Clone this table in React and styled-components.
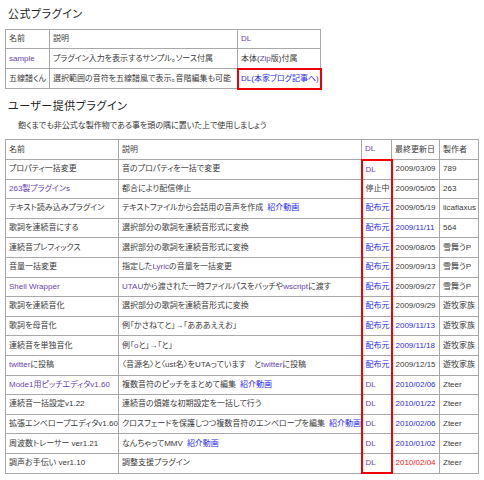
import styled, { createGlobalStyle } from 'styled-components';

const GlobalStyle = createGlobalStyle`
  body {
    margin: 0;
    background: #ffffff;
    font-family: 'Liberation Sans', 'Noto Sans CJK JP', sans-serif;
    font-feature-settings: 'palt';
    color: #3a3a3a;
  }
`;

const Page = styled.div`
  width: 484px;
  height: 480px;
  padding: 0 5px;
  box-sizing: border-box;
  overflow: hidden;
`;

const Heading = styled.h2`
  margin: 0;
  padding-left: 3px;
  font-size: 11px;
  font-weight: 400;
  line-height: 14px;
  color: #222;
  letter-spacing: 0.5px;
  padding-top: ${(p) => p.$top}px;
  padding-bottom: ${(p) => p.$bottom}px;
`;

const Note = styled.p`
  margin: 0;
  padding: 7px 0 7px 13px;
  font-size: 8px;
  line-height: 12px;
  color: #333;
`;

const Table = styled.table`
  border-collapse: collapse;
  border: 1px solid #707070;
  width: ${(p) => p.$width}px;
  table-layout: fixed;
`;

const Row = styled.tr`
  height: ${(p) => p.$h}px;
`;

const Cell = styled.td`
  border: 1px solid #a8a8a8;
  padding: 0 2px 0 3px;
  font-size: 8px;
  line-height: 10px;
  white-space: nowrap;
  overflow: visible;
  color: ${(p) => p.$color || '#3a3a3a'};

  &.boxed {
    border-left: 2px solid #f00000;
    border-right: 2px solid #f00000;
  }
  &.boxTop {
    border-top: 2px solid #f00000;
  }
  &.boxBottom {
    border-bottom: 2px solid #f00000;
  }
  &.boxAll {
    outline: 2px solid #f00000;
    outline-offset: -1px;
  }
`;

const tones = {
  visited: '#6a3fb0',
  blue: '#2a2af0',
  red: '#f02020',
  plain: '#3a3a3a',
};

const Link = styled.span`
  color: ${(p) => tones[p.$tone || 'blue']};
  margin-left: ${(p) => (p.$gap ? 4 : 0)}px;
`;

const officialRows = [
  { name: <Link $tone="visited">sample</Link>, desc: 'プラグイン入力を表示するサンプル。ソース付属', dl: <>本体(<Link $tone="visited">Zip</Link>版)付属</> },
  { name: '五線譜くん', desc: '選択範囲の音符を五線譜風で表示。音階編集も可能', dl: <Link>DL(本家ブログ記事へ)</Link>, boxed: true },
];

const userRows = [
  ['プロパティ一括変更', '音のプロパティを一括で変更', <Link $tone="visited">DL</Link>, '2009/03/09', 'plain', '789'],
  [<Link $tone="visited">263製プラグインs</Link>, '都合により配信停止', '停止中', '2009/05/05', 'plain', '263'],
  ['テキスト読み込みプラグイン', <>テキストファイルから会話用の音声を作成<Link $gap>紹介動画</Link></>, <Link>配布元</Link>, '2009/05/19', 'plain', 'iicafiaxus'],
  ['歌詞を連続音にする', '選択部分の歌詞を連続音形式に変換', <Link>配布元</Link>, '2009/11/11', 'blue', '564'],
  ['連続音プレフィックス', '選択部分の歌詞を連続音形式に変換', <Link>配布元</Link>, '2009/08/05', 'plain', '雪舞うP'],
  ['音量一括変更', <>指定した<Link $tone="visited">Lyric</Link>の音量を一括変更</>, <Link>配布元</Link>, '2009/09/13', 'plain', '雪舞うP'],
  [<Link $tone="visited">Shell Wrapper</Link>, <><Link $tone="visited">UTAU</Link>から渡された一時ファイルパスをバッチや<Link $tone="visited">wscript</Link>に渡す</>, <Link>配布元</Link>, '2009/09/27', 'plain', '雪舞うP'],
  ['歌詞を連続音化', '選択部分の歌詞を連続音形式に変換', <Link>配布元</Link>, '2009/09/29', 'plain', '遊牧家族'],
  ['歌詞を母音化', '例「かさねてと」→「あああええお」', <Link>配布元</Link>, '2009/11/13', 'blue', '遊牧家族'],
  ['連続音を単独音化', <>例「<Link $tone="visited">o</Link>と」→「と」</>, <Link>配布元</Link>, '2009/11/18', 'blue', '遊牧家族'],
  [<><Link $tone="visited">twitter</Link>に投稿</>, <>〈音源名〉と〈ust名〉をUTAっています　と<Link $tone="visited">twitter</Link>に投稿</>, <Link>配布元</Link>, '2009/12/15', 'plain', '遊牧家族'],
  [<Link $tone="visited">Mode1用ピッチエディタv1.60</Link>, <>複数音符のピッチをまとめて編集<Link $gap>紹介動画</Link></>, <Link $tone="visited">DL</Link>, '2010/02/06', 'blue', 'Zteer'],
  ['連続音一括設定v1.22', '連続音の煩雑な初期設定を一括して行う', <Link $tone="visited">DL</Link>, '2010/01/22', 'blue', 'Zteer'],
  ['拡張エンベロープエディタv1.60', <>クロスフェードを保護しつつ複数音符のエンベロープを編集<Link $gap>紹介動画</Link></>, <Link $tone="visited">DL</Link>, '2010/02/06', 'blue', 'Zteer'],
  ['周波数トレーサー ver1.21', <>なんちゃってMMV<Link $gap>紹介動画</Link></>, <Link $tone="visited">DL</Link>, '2010/01/02', 'blue', 'Zteer'],
  ['調声お手伝い ver1.10', '調整支援プラグイン', <Link $tone="visited">DL</Link>, '2010/02/04', 'red', 'Zteer'],
];

const userCols = [113, 243, 30, 48, 39];

export default function App() {
  return (
    <Page>
      <GlobalStyle />
      <Heading $top={7} $bottom={8}>公式プラグイン</Heading>
      <Table $width={315}>
        <colgroup>
          <col style={{ width: 44 }} />
          <col style={{ width: 188 }} />
          <col style={{ width: 83 }} />
        </colgroup>
        <tbody>
          <Row $h={19}>
            <Cell>名前</Cell>
            <Cell>説明</Cell>
            <Cell><Link $tone="visited">DL</Link></Cell>
          </Row>
          {officialRows.map((r, i) => (
            <Row $h={20} key={i}>
              <Cell>{r.name}</Cell>
              <Cell>{r.desc}</Cell>
              <Cell className={r.boxed ? 'boxAll' : ''}>{r.dl}</Cell>
            </Row>
          ))}
        </tbody>
      </Table>
      <Heading $top={10} $bottom={0}>ユーザー提供プラグイン</Heading>
      <Note>飽くまでも非公式な製作物である事を頭の隅に置いた上で使用しましょう</Note>
      <Table $width={473}>
        <colgroup>
          {userCols.map((w, i) => (
            <col key={i} style={{ width: w }} />
          ))}
        </colgroup>
        <tbody>
          <Row $h={20}>
            <Cell>名前</Cell>
            <Cell>説明</Cell>
            <Cell><Link $tone="visited">DL</Link></Cell>
            <Cell>最終更新日</Cell>
            <Cell>製作者</Cell>
          </Row>
          {userRows.map(([name, desc, dl, date, dateTone, maker], i) => {
            const box = ['boxed', i === 0 ? 'boxTop' : '', i === userRows.length - 1 ? 'boxBottom' : '']
              .filter(Boolean)
              .join(' ');
            return (
              <Row $h={19.6} key={i}>
                <Cell>{name}</Cell>
                <Cell>{desc}</Cell>
                <Cell className={box}>{dl}</Cell>
                <Cell $color={tones[dateTone]}>{date}</Cell>
                <Cell>{maker}</Cell>
              </Row>
            );
          })}
        </tbody>
      </Table>
    </Page>
  );
}
